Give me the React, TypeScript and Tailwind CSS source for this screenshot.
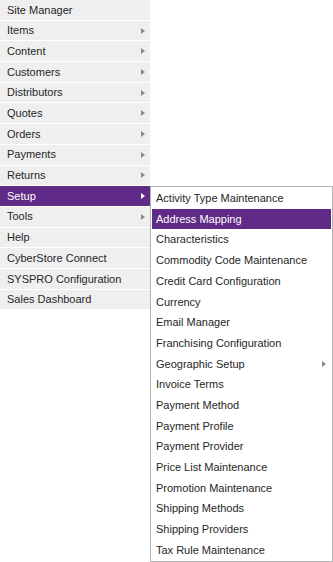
const mainItems: { label: string; sub?: boolean; active?: boolean }[] = [
  { label: "Site Manager" },
  { label: "Items", sub: true },
  { label: "Content", sub: true },
  { label: "Customers", sub: true },
  { label: "Distributors", sub: true },
  { label: "Quotes", sub: true },
  { label: "Orders", sub: true },
  { label: "Payments", sub: true },
  { label: "Returns", sub: true },
  { label: "Setup", sub: true, active: true },
  { label: "Tools", sub: true },
  { label: "Help" },
  { label: "CyberStore Connect" },
  { label: "SYSPRO Configuration" },
  { label: "Sales Dashboard" },
];

const setupItems: { label: string; sub?: boolean; active?: boolean }[] = [
  { label: "Activity Type Maintenance" },
  { label: "Address Mapping", active: true },
  { label: "Characteristics" },
  { label: "Commodity Code Maintenance" },
  { label: "Credit Card Configuration" },
  { label: "Currency" },
  { label: "Email Manager" },
  { label: "Franchising Configuration" },
  { label: "Geographic Setup", sub: true },
  { label: "Invoice Terms" },
  { label: "Payment Method" },
  { label: "Payment Profile" },
  { label: "Payment Provider" },
  { label: "Price List Maintenance" },
  { label: "Promotion Maintenance" },
  { label: "Shipping Methods" },
  { label: "Shipping Providers" },
  { label: "Tax Rule Maintenance" },
];

function Arrow({ light }: { light?: boolean }) {
  return (
    <svg width="4" height="6" viewBox="0 0 4 6" className="shrink-0">
      <path d="M0 0 L4 3 L0 6 Z" fill={light ? "#ffffff" : "#8a8a8a"} />
    </svg>
  );
}

export default function App() {
  return (
    <div
      className="relative w-[333px] h-[562px] bg-white text-[11px] text-[#262626]"
      style={{ fontFamily: '"Liberation Sans", Arial, sans-serif' }}
    >
      {/* main menu */}
      <ul className="w-[150px] flex flex-col">
        {mainItems.map((m) => (
          <li
            key={m.label}
            className={
              "h-[20.7px] flex items-center justify-between pl-[7px] pr-[5px] border-b border-white " +
              (m.active ? "bg-[#5f2b86] text-white" : "bg-[#efefef]")
            }
          >
            <span>{m.label}</span>
            {m.sub && <Arrow light={m.active} />}
          </li>
        ))}
      </ul>

      {/* Setup flyout */}
      <ul className="absolute left-[150px] top-[186px] w-[183px] border border-[#b4b4b4] bg-white p-px flex flex-col">
        {setupItems.map((s) => (
          <li
            key={s.label}
            className={
              "h-[20.7px] flex items-center justify-between pl-[4px] pr-[5px] " +
              (s.active ? "bg-[#5f2b86] text-white" : "")
            }
          >
            <span>{s.label}</span>
            {s.sub && <Arrow />}
          </li>
        ))}
      </ul>
    </div>
  );
}
